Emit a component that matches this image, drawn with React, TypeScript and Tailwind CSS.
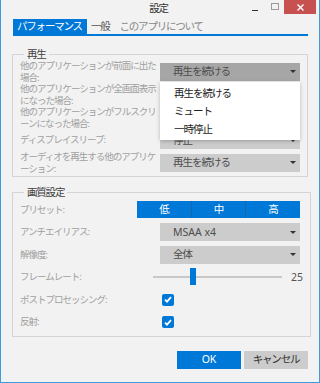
const font = "font-['Noto_Sans','Noto_Sans_CJK_JP',sans-serif]";
const ui = "text-[10.5px] tracking-[-1.2px]";
const small = "text-[9.5px] tracking-[-1px]";

function Combo({ value, open, latin }: { value: string; open?: boolean; latin?: boolean }) {
  return (
    <div
      className={`w-[140px] h-[18px] flex items-center pl-[13px] pr-[4px] ${
        open ? "bg-[#a6a6a6]" : "bg-[#cccccc]"
      }`}
    >
      <span
        className={`flex-1 text-[10.5px] ${
          latin ? "tracking-normal" : "tracking-[-1px]"
        } leading-none text-[#4d4d4d] whitespace-nowrap`}
      >
        {value}
      </span>
      <svg width="6" height="3" viewBox="0 0 6 3">
        <path d="M0 0h6L3 3z" fill="#333" />
      </svg>
    </div>
  );
}

function Label({ lines }: { lines: string[] }) {
  return (
    <div className={`${small} leading-[11.5px] text-[#a0a0a0]`}>
      {lines.map((l) => (
        <div key={l} className="whitespace-nowrap">
          {l}
        </div>
      ))}
    </div>
  );
}

function Check() {
  return (
    <div className="w-[12px] h-[12px] rounded-[2px] bg-[#0078d7] flex items-center justify-center">
      <svg width="8" height="7" viewBox="0 0 8 7">
        <path d="M1 3.6 3 5.6 7 1.2" fill="none" stroke="#fff" strokeWidth="1.8" />
      </svg>
    </div>
  );
}

export default function App() {
  return (
    <div
      className={`w-[320px] h-[383px] bg-[#f2f2f2] border-x border-b border-[#3d9be0] text-[#333] ${font}`}
    >
      {/* Title bar */}
      <div className="flex h-[17px]">
        <div className="flex-1" />
        <div className={`${ui} leading-[17px] text-[#333]`}>設定</div>
        <div className="flex-1 flex justify-end items-start pr-[3px]">
          <div className="w-[6px] h-[1px] bg-[#333] mt-[10px]" />
          <div className="w-[8px] h-[7px] border border-[#999] mt-[3px] ml-[13px]" />
          <div className="w-[32px] h-[14px] bg-[#c75050] ml-[5px] flex items-center justify-center">
            <svg width="7" height="7" viewBox="0 0 7 7">
              <path d="M0.5 0.5 6.5 6.5M6.5 0.5 0.5 6.5" stroke="#fff" strokeWidth="1.4" />
            </svg>
          </div>
        </div>
      </div>

      {/* Tabs */}
      <div className={`mt-[2px] ml-[12px] w-[295px] flex border-b-2 border-[#0078d7] ${ui} leading-[15px]`}>
        <div className="pl-[4px] pr-[5px] h-[15px] bg-[#0078d7] text-white">パフォーマンス</div>
        <div className="pl-[4px] pr-[9px] text-[#555]">一般</div>
        <div className="px-[1px] text-[#888]">このアプリについて</div>
      </div>

      {/* 再生 */}
      <fieldset className="mt-[12px] ml-[11px] w-[296px] border border-[#d4d4d4] pl-[7px] pr-[7px] pb-[2px]">
        <legend className={`ml-[4px] px-[3px] ${ui} leading-[12px] text-[#404040]`}>再生</legend>
        <div className="flex items-center h-[23px]">
          <div className="w-[140px]">
            <Label lines={["他のアプリケーションが前面に出た", "場合:"]} />
          </div>
          <div className="relative">
            <Combo value="再生を続ける" open />
            <div className="absolute left-0 top-[19px] w-[140px] bg-white shadow-[0_1px_4px_rgba(0,0,0,0.25)] pt-[3px] pb-[1px] z-10">
              {["再生を続ける", "ミュート", "一時停止"].map((t) => (
                <div key={t} className={`h-[18px] flex items-center pl-[14px] ${ui} tracking-[-1px] text-[#222]`}>
                  {t}
                </div>
              ))}
            </div>
          </div>
        </div>
        <div className="flex items-center h-[23px]">
          <div className="w-[140px]">
            <Label lines={["他のアプリケーションが全画面表示", "になった場合:"]} />
          </div>
          <Combo value="停止" />
        </div>
        <div className="flex items-center h-[23px]">
          <div className="w-[140px]">
            <Label lines={["他のアプリケーションがフルスクリ", "ーンになった場合:"]} />
          </div>
          <Combo value="停止" />
        </div>
        <div className="flex items-center h-[22px]">
          <div className="w-[140px]">
            <Label lines={["ディスプレイスリープ:"]} />
          </div>
          <Combo value="停止" />
        </div>
        <div className="flex items-center h-[23px]">
          <div className="w-[140px]">
            <Label lines={["オーディオを再生する他のアプリケ", "ーション:"]} />
          </div>
          <Combo value="再生を続ける" />
        </div>
      </fieldset>

      {/* 画質設定 */}
      <fieldset className="mt-[9px] ml-[11px] w-[296px] border border-[#d4d4d4] pl-[7px] pr-[7px] pb-[3px]">
        <legend className={`ml-[4px] px-[3px] ${ui} leading-[12px] text-[#404040]`}>画質設定</legend>
        <div className="flex items-center h-[23px]">
          <div className="w-[117px]">
            <Label lines={["プリセット:"]} />
          </div>
          <div className={`w-[163px] h-[17px] bg-[#0078d7] flex text-white ${ui}`}>
            <div className="w-[55px] flex items-center justify-center border-r border-[#1466ad]">低</div>
            <div className="w-[54px] flex items-center justify-center border-r border-[#1466ad]">中</div>
            <div className="flex-1 flex items-center justify-center">高</div>
          </div>
        </div>
        <div className="flex items-center h-[22px]">
          <div className="w-[140px]">
            <Label lines={["アンチエイリアス:"]} />
          </div>
          <Combo value="MSAA x4" latin />
        </div>
        <div className="flex items-center h-[23px]">
          <div className="w-[140px]">
            <Label lines={["解像度:"]} />
          </div>
          <Combo value="全体" />
        </div>
        <div className="flex items-center h-[22px]">
          <div className="w-[133px]">
            <Label lines={["フレームレート:"]} />
          </div>
          <div className="relative w-[129px] h-[2px] bg-[#c8c8c8]">
            <div className="absolute left-[37px] top-[-8px] w-[6px] h-[17px] bg-[#0078d7]" />
          </div>
          <div className="ml-[9px] text-[10.5px] leading-none text-[#555]">25</div>
        </div>
        <div className="flex items-center h-[23px]">
          <div className="w-[142px]">
            <Label lines={["ポストプロセッシング:"]} />
          </div>
          <Check />
        </div>
        <div className="flex items-center h-[22px]">
          <div className="w-[142px]">
            <Label lines={["反射:"]} />
          </div>
          <Check />
        </div>
      </fieldset>

      {/* Buttons */}
      <div className={`mt-[14px] w-[307px] flex justify-end gap-[3px] ${ui}`}>
        <div className="w-[64px] h-[18px] bg-[#0078d7] text-white flex items-center justify-center tracking-normal">OK</div>
        <div className="w-[64px] h-[18px] bg-[#cccccc] text-[#333] flex items-center justify-center">キャンセル</div>
      </div>
    </div>
  );
}
